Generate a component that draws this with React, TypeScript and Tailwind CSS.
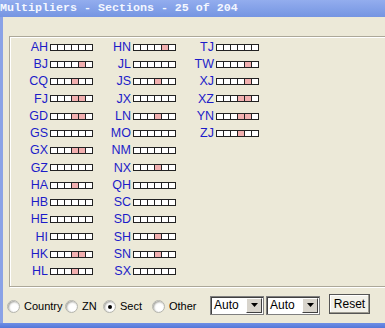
type Row = { code: string; on: number[] };

const columns: Row[][] = [
  [
    { code: 'AH', on: [] },
    { code: 'BJ', on: [4] },
    { code: 'CQ', on: [3] },
    { code: 'FJ', on: [3, 4] },
    { code: 'GD', on: [3, 4] },
    { code: 'GS', on: [] },
    { code: 'GX', on: [3, 4] },
    { code: 'GZ', on: [] },
    { code: 'HA', on: [3] },
    { code: 'HB', on: [] },
    { code: 'HE', on: [] },
    { code: 'HI', on: [] },
    { code: 'HK', on: [3, 4] },
    { code: 'HL', on: [3] },
  ],
  [
    { code: 'HN', on: [4] },
    { code: 'JL', on: [] },
    { code: 'JS', on: [3] },
    { code: 'JX', on: [] },
    { code: 'LN', on: [3] },
    { code: 'MO', on: [] },
    { code: 'NM', on: [] },
    { code: 'NX', on: [3] },
    { code: 'QH', on: [] },
    { code: 'SC', on: [] },
    { code: 'SD', on: [] },
    { code: 'SH', on: [3] },
    { code: 'SN', on: [3] },
    { code: 'SX', on: [] },
  ],
  [
    { code: 'TJ', on: [] },
    { code: 'TW', on: [4] },
    { code: 'XJ', on: [4] },
    { code: 'XZ', on: [3, 4] },
    { code: 'YN', on: [3, 4] },
    { code: 'ZJ', on: [3] },
  ],
];

function Cells({ on }: { on: number[] }) {
  return (
    <div className="flex ml-[2px]">
      {[0, 1, 2, 3, 4, 5].map((i) => (
        <div
          key={i}
          className={
            'w-[8px] h-[7px] border border-[#222] ' +
            (i > 0 ? '-ml-px ' : '') +
            (on.includes(i) ? 'bg-[#f2b0b0]' : 'bg-white')
          }
        />
      ))}
    </div>
  );
}

function Radio({ label, checked, width }: { label: string; checked?: boolean; width: string }) {
  return (
    <div className={`flex items-center gap-[4px] pt-[3px] ${width}`}>
      <div className="w-[13px] h-[13px] rounded-full bg-white border border-[#b4b4ac] shadow-[inset_1px_1px_2px_#a0a09a] flex items-center justify-center">
        {checked && <div className="w-[4px] h-[4px] rounded-full bg-black" />}
      </div>
      <span className="text-[11px] text-black">{label}</span>
    </div>
  );
}

function Combo() {
  return (
    <div className="w-[54px] h-[19px] flex items-center bg-white border border-[#7f7f7f] shadow-[inset_1px_1px_0_#404040]">
      <span className="flex-1 pl-[3px] text-[12px] text-black leading-none">Auto</span>
      <div className="w-[16px] h-[15px] mr-px bg-[#d8d4cc] border border-t-white border-l-white border-r-[#404040] border-b-[#404040] flex items-center justify-center">
        <svg width="7" height="4" viewBox="0 0 7 4">
          <polygon points="0,0 7,0 3.5,4" fill="#000" />
        </svg>
      </div>
    </div>
  );
}

export default function App() {
  return (
    <div
      className="w-[385px] h-[328px] overflow-hidden flex flex-col bg-[#ece9d8]"
      style={{ fontFamily: '"Liberation Sans", Arial, sans-serif' }}
    >
      {/* Title bar */}
      <div className="h-[17px] shrink-0 flex items-center bg-gradient-to-b from-[#93adee] to-[#7595e2]">
        <span
          className="text-[11.67px] font-bold text-[#f4f7ff] whitespace-nowrap leading-none"
          style={{ fontFamily: '"Liberation Mono", "Courier New", monospace' }}
        >
          Multipliers - Sections - 25 of 204
        </span>
      </div>

      <div className="flex-1 flex min-h-0">
        <div className="w-[3px] shrink-0 bg-[#8aa2e6]" />
        <div className="flex-1 flex flex-col pl-[6px] pt-[19px] min-w-0">
          {/* Group box */}
          <div className="w-[400px] h-[251px] shrink-0 border border-[#aca899] shadow-[inset_1px_1px_0_#fff,1px_1px_0_#fff] pt-[1.5px]">
            <div className="flex">
              {columns.map((col, ci) => (
                <div key={ci} className="w-[83px] flex flex-col">
                  {col.map((r) => (
                    <div key={r.code} className="h-[17.25px] flex items-center">
                      <span className="w-[38px] text-right text-[12.5px] text-[#1c1cc8] leading-none">
                        {r.code}
                      </span>
                      <Cells on={r.on} />
                    </div>
                  ))}
                </div>
              ))}
            </div>
          </div>

          {/* Bottom controls */}
          <div className="h-[36px] flex items-center -ml-[2px]">
            <Radio label="Country" width="w-[58px]" />
            <Radio label="ZN" width="w-[38px]" />
            <Radio label="Sect" checked width="w-[49px]" />
            <Radio label="Other" width="w-[58px]" />
            <div className="flex gap-[2px]">
              <Combo />
              <Combo />
            </div>
            <button className="ml-[9px] mb-[3px] w-[41px] h-[20px] bg-[#f2f1ea] border border-[#555] shadow-[inset_-1px_-1px_0_#9c9a90,inset_1px_1px_0_#fff] text-[12px] text-black leading-none">
              Reset
            </button>
          </div>
        </div>
      </div>

      <div className="h-[5px] shrink-0 bg-gradient-to-b from-[#6e8fe6] to-[#5477d8]" />
    </div>
  );
}
